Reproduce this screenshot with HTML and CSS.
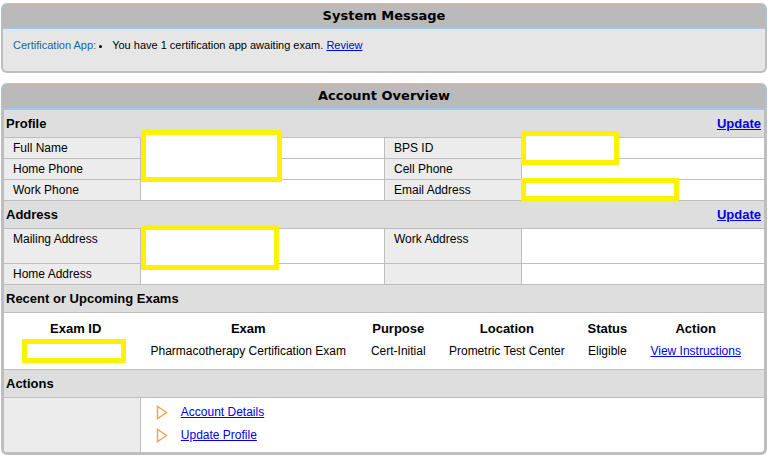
FILE: index.html
```html
<!DOCTYPE html>
<html lang="en">
<head>
    <meta charset="UTF-8">
    <meta name="viewport" content="width=device-width, initial-scale=1.0">
    <title>Account Overview</title>
    <link rel="stylesheet" href="styles.css">
</head>
<body>
    <section class="panel">
        <h2 class="panel-title">System Message</h2>
        <div class="panel-body message">
            <span class="message-label">Certification App:</span>
            <ul class="message-list">
                <li>You have 1 certification app awaiting exam. <a href="#">Review</a></li>
            </ul>
        </div>
    </section>

    <section class="panel">
        <h2 class="panel-title">Account Overview</h2>
        <div class="panel-body overview">
            <div class="section-bar">
                <h3>Profile</h3>
                <a href="#">Update</a>
            </div>
            <table class="details">
                <tr>
                    <th scope="row">Full Name</th>
                    <td><span class="redact redact-name"></span></td>
                    <th scope="row">BPS ID</th>
                    <td><span class="redact redact-id"></span></td>
                </tr>
                <tr>
                    <th scope="row">Home Phone</th>
                    <td></td>
                    <th scope="row">Cell Phone</th>
                    <td></td>
                </tr>
                <tr>
                    <th scope="row">Work Phone</th>
                    <td></td>
                    <th scope="row">Email Address</th>
                    <td><span class="redact redact-email"></span></td>
                </tr>
            </table>

            <div class="section-bar">
                <h3>Address</h3>
                <a href="#">Update</a>
            </div>
            <table class="details">
                <tr class="tall">
                    <th scope="row">Mailing Address</th>
                    <td><span class="redact redact-address"></span></td>
                    <th scope="row">Work Address</th>
                    <td></td>
                </tr>
                <tr>
                    <th scope="row">Home Address</th>
                    <td></td>
                    <th></th>
                    <td></td>
                </tr>
            </table>

            <div class="section-bar">
                <h3>Recent or Upcoming Exams</h3>
            </div>
            <div class="exams-wrap">
                <table class="exams">
                    <colgroup>
                        <col class="col-id">
                        <col class="col-exam">
                        <col class="col-purpose">
                        <col class="col-location">
                        <col class="col-status">
                        <col class="col-action">
                    </colgroup>
                    <tr>
                        <th>Exam ID</th>
                        <th>Exam</th>
                        <th>Purpose</th>
                        <th>Location</th>
                        <th>Status</th>
                        <th>Action</th>
                    </tr>
                    <tr>
                        <td><span class="redact-exam"></span></td>
                        <td>Pharmacotherapy Certification Exam</td>
                        <td>Cert-Initial</td>
                        <td>Prometric Test Center</td>
                        <td>Eligible</td>
                        <td><a href="#">View Instructions</a></td>
                    </tr>
                </table>
            </div>

            <div class="section-bar">
                <h3>Actions</h3>
            </div>
            <div class="actions">
                <div class="actions-side"></div>
                <ul class="actions-list">
                    <li>
                        <svg class="arrow" width="12" height="15" viewBox="0 0 12 15"><path d="M1.5 1.5V13.5L10.5 7.5Z" /></svg>
                        <a href="#">Account Details</a>
                    </li>
                    <li>
                        <svg class="arrow" width="12" height="15" viewBox="0 0 12 15"><path d="M1.5 1.5V13.5L10.5 7.5Z" /></svg>
                        <a href="#">Update Profile</a>
                    </li>
                </ul>
            </div>
        </div>
    </section>
</body>
</html>
```
FILE: styles.css
```css
* {
    box-sizing: border-box;
}
body {
    margin: 3px 7px 0 1px;
    background-color: white;
    color: black;
    font-family: "Liberation Sans", Arial, sans-serif;
    font-size: 12px;
}
h2, h3, ul {
    margin: 0;
    padding: 0;
}
a {
    color: #0000ee;
}

/* Panels */
.panel {
    margin-bottom: 10px;
}
.panel:last-child {
    margin-bottom: 0;
}
.panel-title {
    border: 1px solid #a5c3e3;
    border-radius: 6px 6px 0 0;
    background-color: #bababa;
    font-family: "DejaVu Sans", Verdana, sans-serif;
    font-size: 13px;
    line-height: 24px;
    text-align: center;
}
.panel-body {
    border: 2px solid #bebebe;
    border-top: none;
    border-radius: 0 0 6px 6px;
}

/* System message */
.message {
    display: flex;
    padding: 9px 10px 19px;
    background-color: #e6e6e6;
    font-size: 11px;
    line-height: 14px;
}
.message-label {
    color: #0f6aa0;
}
.message-list {
    padding-left: 16px;
}

/* Account overview */
.overview {
    border: 3px solid #bebebe;
    border-top-width: 1px;
    overflow: hidden;
}
.section-bar {
    display: flex;
    justify-content: space-between;
    padding: 0 3px 0 2px;
    border-bottom: 1px solid #bebebe;
    background-color: #dedede;
    font-size: 13px;
    font-weight: bold;
    line-height: 27px;
}
.section-bar h3 {
    font-size: 13px;
}

.details {
    width: 100%;
    table-layout: fixed;
    border-spacing: 0;
}
.details th,
.details td {
    position: relative;
    height: 21px;
    padding: 0;
    border-bottom: 1px solid #bebebe;
    line-height: 20px;
    vertical-align: top;
}
.details th {
    width: 18%;
    padding-left: 9px;
    background-color: #ececec;
    font-weight: normal;
    text-align: left;
}
.details td {
    width: 32%;
}
.details th:first-child {
    border-right: 1px solid #bebebe;
}
.details th:nth-child(3),
.details td:last-child {
    border-left: 1px solid #bebebe;
}
.details .tall th,
.details .tall td {
    height: 35px;
}

/* Boxes over the private values */
.redact {
    position: absolute;
    z-index: 1;
    border: 5px solid #fff200;
    background-color: white;
}
.redact-name {
    top: -8px;
    left: 0;
    width: 141px;
    height: 52px;
}
.redact-id {
    top: -7px;
    left: -1px;
    width: 98px;
    height: 34px;
}
.redact-email {
    top: -2px;
    left: -1px;
    width: 158px;
    height: 23px;
}
.redact-address {
    top: -4px;
    left: 0;
    width: 138px;
    height: 45px;
}
.redact-exam {
    display: block;
    width: 104px;
    height: 24px;
    margin-left: 18px;
    border: 5px solid #fff200;
}

/* Exams */
.exams-wrap {
    padding: 6px 21px 6px 0;
    border-bottom: 1px solid #bebebe;
}
.exams {
    width: 100%;
    table-layout: fixed;
    border-spacing: 0;
    text-align: center;
    white-space: nowrap;
}
.exams th {
    padding: 0;
    font-size: 13px;
    line-height: 20px;
}
.exams td {
    padding: 0;
    line-height: 24px;
}
.col-id {
    width: 19.4%;
}
.col-exam {
    width: 27.3%;
}
.col-purpose {
    width: 13.3%;
}
.col-location {
    width: 16.1%;
}
.col-status {
    width: 11.1%;
}
.col-action {
    width: 12.8%;
}

/* Actions */
.actions {
    display: flex;
}
.actions-side {
    width: 18%;
    border-right: 1px solid #bebebe;
    background-color: #ececec;
}
.actions-list {
    padding: 3px 15px 5px;
    list-style: none;
}
.actions-list li {
    display: flex;
    align-items: center;
    gap: 13px;
    line-height: 23px;
}
.arrow {
    fill: none;
    stroke: #f5a55a;
    stroke-width: 1.5;
}
```
